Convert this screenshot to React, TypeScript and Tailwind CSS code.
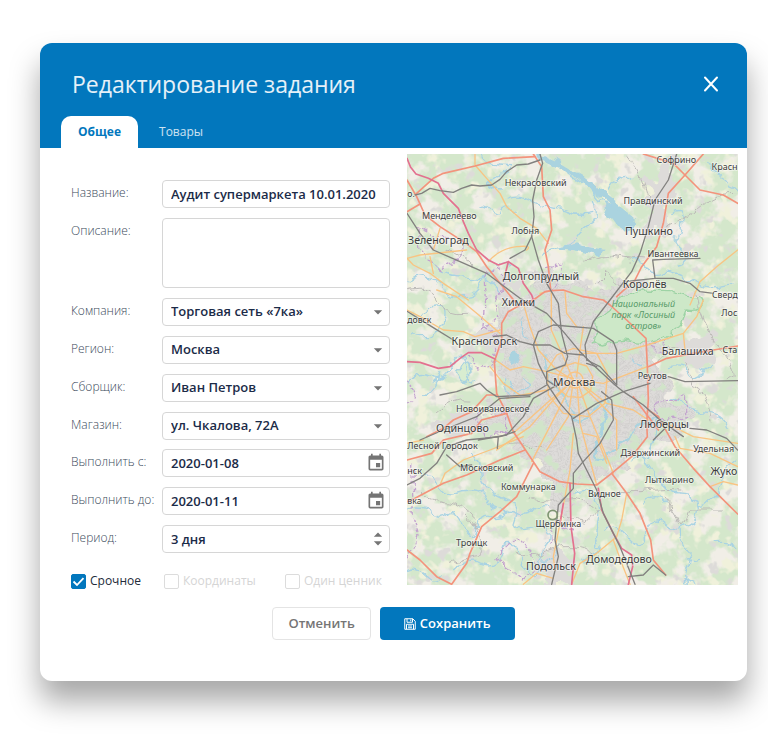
import { ReactNode } from 'react'
import { MdArrowDropDown, MdArrowDropUp, MdEvent } from 'react-icons/md'

const selects = [
  { id: 'company', label: 'Компания:', value: 'Торговая сеть «7ка»' },
  { id: 'region', label: 'Регион:', value: 'Москва' },
  { id: 'picker', label: 'Сборщик:', value: 'Иван Петров' },
  { id: 'store', label: 'Магазин:', value: 'ул. Чкалова, 72А' },
]

const dates = [
  { id: 'from', label: 'Выполнить с:', value: '2020-01-08' },
  { id: 'to', label: 'Выполнить до:', value: '2020-01-11' },
]

const flags = [
  { id: 'urgent', label: 'Срочное', checked: true },
  { id: 'coords', label: 'Координаты', checked: false },
  { id: 'price-tag', label: 'Один ценник', checked: false },
]

const control =
  'w-full rounded-[4px] border border-[#d6d6d6] bg-white px-2 text-[13px] font-semibold text-[#1b2b48] outline-none focus:border-[#0277bd]'

function Row({ id, label, children }: { id: string; label: string; children: ReactNode }) {
  return (
    <div className="flex items-start">
      <label htmlFor={id} className="w-[91px] shrink-0 pt-1 text-xs leading-[18px] font-light whitespace-nowrap text-[#3b4a5b]">
        {label}
      </label>
      <div className="relative min-w-0 flex-1">{children}</div>
    </div>
  )
}

function SaveIcon() {
  return (
    <svg className="size-3" viewBox="0 0 24 24" fill="none" stroke="currentColor" strokeWidth="2" aria-hidden="true">
      <path d="M1.5 1.5h16l5 5v16h-21z" />
      <path d="M6 1.5v7h11v-7M13.5 3v3.500" />
      <path d="M5 22.500v-10h14v10M8 16h8M8 19.500h8" />
    </svg>
  )
}

const rivers = [
  'M490 50Q505 75 530 90T570 110L600 150L640 170',
  'M21 400Q60 370 90 385T130 420T190 440T240 400T300 430',
  'M100 340Q130 380 170 380T230 385T280 360T340 350',
  'M235 175Q260 160 270 180T310 180T350 185M240 12Q250 40 280 45T330 50T290 80T300 120',
  'M320 145Q360 130 390 150T440 170T500 185T580 190',
  'M430 320Q450 290 480 290T530 260T575 220T580 150',
  'M700 80Q680 90 660 85T620 120M920 30Q930 60 960 75T990 110L1013 120',
  'M820 185Q850 170 845 220T830 270T850 300T830 340',
  'M700 330Q730 340 740 360T780 370T850 380T920 410T1000 400',
  'M21 1080Q60 1060 90 1085T140 1090T190 1130T230 1140T270 1100T330 1080',
  'M60 985Q90 960 110 1000T160 1030T220 1020T260 1050T300 1080T350 1090T400 1080T450 1070',
  'M210 900Q240 930 240 970T280 1030T340 1060T345 1110T400 1130T430 1200T480 1190',
  'M160 1260Q200 1220 250 1240T310 1200T370 1240T430 1220',
  'M21 1265Q50 1250 80 1280T130 1275',
  'M21 700Q50 660 90 680T160 640T200 650T230 690M70 740Q110 700 120 670',
  'M60 500Q90 460 120 470T130 520T80 560T30 550',
  'M690 930Q720 910 740 940T770 980T800 1010T850 1030T890 1060T940 1040T970 960T1013 940',
  'M890 1060Q900 1110 860 1130T790 1120T740 1150T680 1160T620 1140',
  'M840 1130Q840 1170 860 1200T860 1260T880 1303M860 1230L900 1225M950 1175Q990 1170 1013 1200',
  'M800 1060Q760 1020 730 1060M810 650Q850 640 860 670T940 640M690 620Q710 650 720 650',
  'M810 750Q830 730 850 760T920 790T980 830',
  'M520 1030Q560 1010 580 1040T590 1130T600 1190T550 1230',
  'M370 500Q360 540 380 560M330 690Q340 730 370 720T380 690M330 740Q300 700 310 680',
]

const minor = [
  'M21 420Q90 400 110 450T200 490M140 300Q200 320 220 350',
  'M680 12Q720 60 735 110T740 150M800 230Q860 210 900 170T1000 130',
  'M560 330Q600 310 650 320T740 330M590 400L620 370L660 410',
  'M880 420Q900 520 960 600T990 690M850 640L920 760L930 810M770 640Q780 600 830 590',
  'M60 1030Q120 1060 150 1060T230 1110M380 1040Q440 1060 500 1050T590 1090',
  'M620 1025L720 1025Q800 1015 840 1020M790 1040L850 1130L870 1080L970 1080',
  'M190 1090Q250 1140 245 1180T230 1220T150 1240M340 1210Q380 1230 450 1200T600 1220',
  'M110 790Q160 740 210 750M330 880Q360 860 390 890L420 880M480 1100L560 1110L600 1080',
]

const secondary = [
  'M225 12V45L260 85L300 130L320 170L360 205L410 235L445 280',
  'M21 325L60 315L200 300M120 235L100 300M265 335Q300 295 350 290T380 300',
  'M21 325L40 345L90 370L130 400L205 450M90 320L100 370',
  'M21 480L60 500L130 540L190 545L225 560L300 540M110 420L170 440L230 490L300 550',
  'M370 460L390 530L415 600L470 660L520 690M283 627L330 660L370 650L440 665L520 685',
  'M270 650L310 700L360 735M454 425V540L490 620L520 690M495 425L500 490L530 530',
  'M550 610L650 610L742 585L850 550L890 500L910 450',
  'M870 465L900 395L950 350L1013 300M850 550L855 600M550 530L540 600L530 680',
  'M530 690L610 700L742 650M530 690L620 760L700 780L745 810',
  'M520 690L460 750L390 830L290 900M520 690L440 720L320 745M520 690L470 790L395 935',
  'M520 690L505 800L440 900M530 690L570 800L620 920L640 970M530 690L540 820L590 1005',
  'M530 690L650 810L650 900M510 700L440 760L340 850M550 850L590 860L620 940',
  'M680 1030L665 1110L650 1160L590 1210L540 1240L515 1303',
  'M930 1010L970 995L1013 1005M825 860L840 895L930 910L1013 950M800 820L880 860L1013 880',
  'M120 1005L135 970L190 930L270 900L370 860M370 1303L410 1270L460 1285',
  'M520 850L510 960L480 1120L460 1220L465 1260M21 880L70 870',
  'M640 1170L665 1240L690 1303M420 430L455 422',
]

const trunk = [
  'M435 425L400 450L370 460L325 485L305 520V570L283 635L290 730L320 790L340 845L400 935L420 965L480 995L530 1002L590 1005L635 970L695 920L742 860L740 820L745 750L742 650L738 565L680 510L630 465L610 450L550 440L490 420L455 422Z',
  'M21 90L50 140L75 195L120 230L190 275L230 305L260 350L300 400L345 455',
  'M21 185L60 162M50 130L100 85L130 70L225 48L310 25L405 20',
  'M400 12L425 50L430 140L450 180L455 240L435 300L445 350L452 420',
  'M910 12L855 75L805 130L790 220L770 290L725 350L705 390L650 440',
  'M730 12L820 40L855 75L900 120L970 135L1013 160',
  'M745 650L800 625L880 610L940 600L1014 588',
  'M745 780L775 800L825 890L880 955L930 1010L1013 1092M700 740L775 840',
  'M635 970L680 1030L720 1090L752 1170L760 1230L797 1275',
  'M400 940L350 1040L300 1085L245 1130L210 1210L200 1240L155 1303L110 1280L60 1230L21 1200',
  'M21 1055L45 1045L130 1000L200 975L300 930L375 900',
  'M21 930L95 910L130 870L215 850L245 810L320 790M80 860L130 835L160 810L215 785L260 735L290 735',
]

const motorway = [
  'M21 25L32 52L48 72L85 85L115 100L130 130L175 175L190 215L205 250L230 300L265 330L295 345L325 335L355 355L370 400L395 435L400 450',
  'M21 635L60 637L115 655L150 650L180 625L205 608L245 608L285 627M325 335L315 375',
  'M510 1000L513 1130L524 1210L515 1303M490 1060L480 1120',
  'M595 1015L605 1080L640 1150L665 1195L695 1215L698 1250L685 1303',
]

const rail = [
  'M21 190L60 250L100 300L180 335L260 370L360 445L440 490L490 545L540 605L580 645L645 705L670 725L730 765L780 810L850 860',
  'M420 12L428 40L410 90L398 150L402 200L395 260L415 330L440 400L475 460L485 550L503 620L495 645L440 665V700L480 760L515 800L530 870L535 910L560 960L590 1020L610 1090L660 1190L705 1303',
  'M395 260L375 300L330 325M830 12L805 90L765 150L745 230L720 310L695 365L630 450L580 515L555 585L560 630',
  'M675 395L765 385L820 385L870 400L900 425L940 430M765 385L758 330L790 328L900 325',
  'M21 484L95 530L160 570M280 560L320 555L360 575L400 585H450L495 610L550 615M400 585L415 545L460 525L580 535L640 575L650 600V705',
  'M400 585L415 640L440 690L470 710M120 735L170 725L240 700L260 720L290 740L390 735L440 705',
  'M60 870L130 840L230 800L300 745L390 740M235 870L320 855L370 800L400 745L480 700',
  'M21 1005L60 985L110 940L140 890L200 870L300 860L345 845M295 860L292 895M140 915L180 950L215 945',
  'M670 725L590 760L520 805M605 725L635 750L640 810L600 880L545 940L520 970V1015L475 1065L465 1170L475 1220L455 1303',
  'M670 725L750 700M805 680L855 695L1013 692M870 835L920 840L980 865L1013 900M560 630L600 650L650 705',
  'M685 1280L730 1275L760 1245L797 1275M760 870L800 830M590 650L560 640',
]

const borders = [
  'M50 230L110 260L180 260L185 320L120 360L60 300ZM255 370L300 360L320 400L285 450L290 500L250 540L260 470Z',
  'M200 610L230 660L280 650L290 560L250 530M21 690L45 730L21 760',
  'M230 790L320 790L310 850L250 860ZM35 940L40 1100L55 1150L21 1230',
  'M285 1220L350 1160L400 1210L410 1260L370 1290L310 1240ZM745 590L800 570L790 610ZM760 760L860 740L860 800L780 810Z',
  'M440 350L490 335L480 400L450 420M450 1180L460 1110L520 1150',
]

// [text, x, baseline, size, anchor]
const places: [string, number, number, number, 'start' | 'middle' | 'end'][] = [
  ['о.', 22, 140, 26, 'start'],
  ['Некрасовский', 407, 107, 27, 'middle'],
  ['Менделеево', 148, 207, 27, 'middle'],
  ['Зеленоград', 115, 281, 32, 'middle'],
  ['Лобня', 376, 253, 27, 'middle'],
  ['Долгопрудный', 423, 391, 32, 'middle'],
  ['Софрино', 829, 38, 27, 'middle'],
  ['Красн', 1013, 60, 27, 'end'],
  ['Правдинский', 759, 163, 27, 'middle'],
  ['Пушкино', 747, 256, 32, 'middle'],
  ['Ивантеевка', 819, 322, 27, 'middle'],
  ['Королёв', 734, 413, 32, 'middle'],
  ['Сверд', 1013, 443, 26, 'end'],
  ['Химки', 355, 467, 32, 'middle'],
  ['довск', 22, 520, 26, 'start'],
  ['Красногорск', 253, 585, 32, 'middle'],
  ['Лос', 1012, 498, 27, 'end'],
  ['Балашиха', 863, 615, 32, 'middle'],
  ['Ста', 1012, 610, 27, 'end'],
  ['Реутов', 757, 687, 27, 'middle'],
  ['Москва', 523, 708, 35, 'middle'],
  ['Новоивановское', 278, 785, 27, 'middle'],
  ['Одинцово', 187, 847, 32, 'middle'],
  ['Люберцы', 793, 835, 32, 'middle'],
  ['Лесной Городок', 22, 898, 27, 'start'],
  ['Дзержинский', 751, 917, 27, 'middle'],
  ['Удельная', 941, 905, 27, 'middle'],
  ['Московский', 260, 963, 27, 'middle'],
  ['нск', 22, 973, 27, 'start'],
  ['Жуко', 1012, 975, 32, 'end'],
  ['Коммунарка', 385, 1020, 27, 'middle'],
  ['Лыткарино', 808, 1000, 27, 'middle'],
  ['вка', 22, 1063, 26, 'start'],
  ['Видное', 613, 1042, 27, 'middle'],
  ['Щербинка', 475, 1131, 27, 'middle'],
  ['Троицк', 215, 1188, 27, 'middle'],
  ['Подольск', 453, 1261, 32, 'middle'],
  ['Домодедово', 657, 1240, 32, 'middle'],
]

const park = ['Национальный', 'парк «Лосиный', 'остров»']

const cityOutline =
  'M320 480L370 430L440 350L500 400L600 430L690 370L740 400L700 450L720 500L780 590L780 690L880 800L830 860L750 860L680 940L640 970L520 1000L500 1120L450 1080L470 1000L410 930L300 840L200 840L300 760L290 580Z'

function MoscowMap() {
  return (
    <svg className="block h-auto w-full" viewBox="21 12 993 1293" role="img" aria-label="Карта">
      <defs>
        <filter id="forest" x="0" y="0" width="100%" height="100%" colorInterpolationFilters="sRGB">
          <feTurbulence type="fractalNoise" baseFrequency="0.014" numOctaves="4" seed="7" />
          <feColorMatrix values="0 0 0 0 0.830  0 0 0 0 0.906  0 0 0 0 0.795  7 0 0 0 -2.600" />
        </filter>
        <filter id="fields" x="0" y="0" width="100%" height="100%" colorInterpolationFilters="sRGB">
          <feTurbulence type="fractalNoise" baseFrequency="0.022" numOctaves="3" seed="21" />
          <feColorMatrix values="0 0 0 0 0.940  0 0 0 0 0.945  0 0 0 0 0.860  0 7 0 0 -3.900" />
        </filter>
        <filter id="towns" x="0" y="0" width="100%" height="100%" colorInterpolationFilters="sRGB">
          <feTurbulence type="fractalNoise" baseFrequency="0.026" numOctaves="3" seed="4" />
          <feColorMatrix values="0 0 0 0 0.865  0 0 0 0 0.860  0 0 0 0 0.850  0 0 8 0 -5.100" />
        </filter>
        <filter id="parks" x="0" y="0" width="100%" height="100%" colorInterpolationFilters="sRGB">
          <feTurbulence type="fractalNoise" baseFrequency="0.022" numOctaves="3" seed="12" />
          <feColorMatrix values="0 0 0 0 0.820  0 0 0 0 0.895  0 0 0 0 0.790  10 0 0 0 -5.600" />
          <feComposite in2="SourceGraphic" operator="in" />
        </filter>
        <filter id="rough" x="-10%" y="-10%" width="120%" height="120%">
          <feTurbulence type="fractalNoise" baseFrequency="0.018" numOctaves="3" seed="3" />
          <feDisplacementMap in="SourceGraphic" scale="110" xChannelSelector="R" yChannelSelector="G" />
        </filter>
        <filter id="wiggle" x="-5%" y="-5%" width="110%" height="110%">
          <feTurbulence type="fractalNoise" baseFrequency="0.03" numOctaves="2" seed="9" />
          <feDisplacementMap in="SourceGraphic" scale="34" xChannelSelector="R" yChannelSelector="G" />
        </filter>
        <pattern id="streets" width="34" height="28" patternUnits="userSpaceOnUse" patternTransform="rotate(24)">
          <path d="M0 8H34M12 0V28M24 8V28M12 20H34" stroke="#cbc9c8" strokeWidth="2" fill="none" />
        </pattern>
      </defs>

      <rect x="21" y="12" width="993" height="1293" fill="#f1eee7" />
      <rect x="21" y="12" width="993" height="1293" filter="url(#forest)" />
      <rect x="21" y="12" width="993" height="1293" filter="url(#fields)" />
      <rect x="21" y="12" width="993" height="1293" filter="url(#towns)" />

      <g filter="url(#rough)">
        <path d={cityOutline} fill="#dddbd9" />
        <path
          d="M270 360L340 390L370 460L310 460ZM860 590L940 570L930 640L850 640ZM740 120L800 30L830 60L780 250L740 260ZM210 550L300 530L300 600L230 600ZM120 810L240 790L260 850L130 860ZM410 1230L500 1200L510 1290L420 1290Z"
          fill="#dddbd9"
        />
        <path d={cityOutline} fill="url(#streets)" />
      </g>
      <path d={cityOutline} filter="url(#parks)" />

      <g filter="url(#wiggle)">
        <path
          d="M670 440L720 420L810 422L860 440L895 440L910 470L880 482L855 480L835 530L780 570L735 580L675 570L610 585L575 575L590 540L580 515L630 480Z"
          fill="#cde8c8"
          stroke="#9dd3a5"
          strokeWidth="4"
        />
        <path d="M605 158L655 165L715 215L705 240L660 238L625 195Z" fill="#aad3df" />
        <path d="M420 18L480 45L530 75L600 130L660 175" fill="none" stroke="#aad3df" strokeWidth="15" />
        <path d="M470 292L540 280L570 292L620 300L600 315L540 305Z" fill="#aad3df" />
        <path d="M325 615L350 605L360 630L330 645Z" fill="#aad3df" />
        <path d="M175 680Q160 650 190 640T210 690Q190 710 175 680" fill="#d8edd0" stroke="#aad3df" strokeWidth="5" />
        <g fill="none" stroke="#a9d3e3" strokeWidth="4">
          {rivers.map((d) => (
            <path key={d} d={d} />
          ))}
        </g>
        <path d="M440 610Q430 680 470 720T520 800T590 770T600 850T690 860T740 930" fill="none" stroke="#aad3df" strokeWidth="7" />
      </g>

      <g fill="none" strokeLinejoin="round" strokeLinecap="round">
        <g stroke="#bdbbb8" strokeWidth="3" filter="url(#wiggle)">
          {minor.map((d) => (
            <path key={d} d={d} />
          ))}
        </g>
        <g stroke="#c3a3cf" strokeWidth="4" strokeDasharray="9 9" filter="url(#wiggle)">
          {borders.map((d) => (
            <path key={d} d={d} />
          ))}
        </g>
        <g stroke="#f9c482" strokeWidth="4">
          {secondary.map((d) => (
            <path key={d} d={d} />
          ))}
          <circle cx="525" cy="690" r="24" />
          <path d="M525 638L560 648L578 680L572 722L542 742L504 740L478 718L474 680L490 650Z" />
          <path d="M520 595L590 610L622 670L615 760L565 800L490 790L445 735L442 660L470 615Z" />
        </g>
        <g stroke="#f3937c" strokeWidth="5">
          {trunk.map((d) => (
            <path key={d} d={d} />
          ))}
        </g>
        <g stroke="#e3718f" strokeWidth="5">
          {motorway.map((d) => (
            <path key={d} d={d} />
          ))}
        </g>
        <g stroke="#82817f" strokeWidth="4">
          {rail.map((d) => (
            <path key={d} d={d} />
          ))}
          <path d="M45 135L65 130L90 115L120 122L160 127L185 115L215 105L240 108L275 105L300 88L320 65L350 45L385 42L420 30" />
        </g>
        <circle cx="458" cy="1095" r="14" stroke="#7f9673" strokeWidth="5" />
      </g>

      <g className="font-['Noto_Sans',sans-serif]" fill="#3d3d3d" stroke="#ffffff" strokeOpacity="0.5" strokeWidth="5" paintOrder="stroke">
        {places.map(([name, x, y, size, anchor]) => (
          <text key={name} x={x} y={y} fontSize={size} textAnchor={anchor}>
            {name}
          </text>
        ))}
      </g>
      <g className="font-['Noto_Sans',sans-serif] italic" fill="#5a9c6b" textAnchor="middle" fontSize="27">
        {park.map((line, i) => (
          <text key={line} x={730} y={470 + i * 34}>
            {line}
          </text>
        ))}
      </g>
    </svg>
  )
}

export default function App() {
  return (
    <div className="min-h-screen bg-white pt-[43px] pr-[21px] pb-[67px] pl-10 font-['Open_Sans',sans-serif]">
      <main className="overflow-hidden rounded-xl bg-white shadow-[0_20px_30px_rgba(0,0,0,0.35)]">
        <header className="bg-[#0277bd] pr-7 pl-[21px]">
          <div className="flex items-center justify-between pt-6 pl-[11px]">
            <h1 className="text-[23px] leading-[34px] text-white/90">Редактирование задания</h1>
            <button type="button" aria-label="Закрыть" className="text-white">
              <svg className="size-4" viewBox="0 0 16 16" fill="none" stroke="currentColor" strokeWidth="2" strokeLinecap="round">
                <path d="M2 1.500l12 13M14 1.500l-12 13" />
              </svg>
            </button>
          </div>
          <nav role="tablist" className="flex pt-[15px] text-xs">
            <button type="button" role="tab" aria-selected="true" className="h-8 rounded-t-[10px] bg-white px-[17px] font-bold text-[#0277bd]">
              Общее
            </button>
            <button type="button" role="tab" aria-selected="false" className="h-8 px-[21px] text-white/80">
              Товары
            </button>
          </nav>
        </header>

        <form className="pt-[6px] pb-[41px]" onSubmit={(e) => e.preventDefault()}>
          <div className="flex items-start gap-[17px] pr-[9px] pl-[31px]">
            <div className="w-[319px] shrink-0 pt-[26px]">
              <div className="flex flex-col gap-[10px]">
                <Row id="name" label="Название:">
                  <input id="name" type="text" defaultValue="Аудит супермаркета 10.01.2020" className={`block h-7 ${control}`} />
                </Row>
                <Row id="description" label="Описание:">
                  <textarea id="description" className={`block h-[70px] resize-none ${control}`} />
                </Row>
                {selects.map(({ id, label, value }) => (
                  <Row key={id} id={id} label={label}>
                    <select id={id} className={`block h-7 appearance-none ${control}`}>
                      <option>{value}</option>
                    </select>
                    <MdArrowDropDown className="pointer-events-none absolute top-1 right-[2px] size-5 text-[#757575]" />
                  </Row>
                ))}
              </div>
              <div className="mt-[9px] flex flex-col gap-[10px]">
                {dates.map(({ id, label, value }) => (
                  <Row key={id} id={id} label={label}>
                    <input id={id} type="text" defaultValue={value} className={`block h-7 ${control}`} />
                    <button type="button" aria-label="Выбрать дату" className="absolute top-1 right-1 text-[#757575]">
                      <MdEvent className="size-5" />
                    </button>
                  </Row>
                ))}
                <Row id="period" label="Период:">
                  <input id="period" type="text" defaultValue="3 дня" className={`block h-7 ${control}`} />
                  <span className="absolute top-[6px] right-[2px] flex flex-col text-[#757575]">
                    <button type="button" aria-label="Больше" className="h-2 overflow-hidden">
                      <MdArrowDropUp className="-mt-[6px] size-5" />
                    </button>
                    <button type="button" aria-label="Меньше" className="h-2 overflow-hidden">
                      <MdArrowDropDown className="-mt-[6px] size-5" />
                    </button>
                  </span>
                </Row>
              </div>
              <div className="mt-[19px] grid grid-cols-[93px_121px_auto] text-xs">
                {flags.map(({ id, label, checked }) => (
                  <label
                    key={id}
                    className="flex items-center gap-1 leading-[18px] whitespace-nowrap text-[#d5d5d5] has-checked:text-[#222c3a]"
                  >
                    <span className="relative">
                      <input
                        id={id}
                        type="checkbox"
                        defaultChecked={checked}
                        className="peer block size-[15px] appearance-none rounded-[2px] border border-[#dcdcdc] bg-white checked:border-[#0277bd] checked:bg-[#0277bd]"
                      />
                      <svg
                        className="pointer-events-none absolute inset-0 hidden size-[15px] text-white peer-checked:block"
                        viewBox="0 0 15 15"
                        fill="none"
                        stroke="currentColor"
                        strokeWidth="1.800"
                      >
                        <path d="M2.500 7.500l3.500 3.500l6.500-6.800" />
                      </svg>
                    </span>
                    {label}
                  </label>
                ))}
              </div>
            </div>
            <div className="min-w-0 flex-1">
              <MoscowMap />
            </div>
          </div>

          <div className="mt-[17px] flex items-center justify-center gap-[9px] text-[13px] font-semibold">
            <button type="button" className="h-[33px] rounded-[4px] border border-[#e4e4e4] px-[15px] text-[#757575]">
              Отменить
            </button>
            <button type="submit" className="flex h-[33px] items-center gap-1 rounded-[4px] bg-[#0277bd] px-6 text-white">
              <SaveIcon />
              Сохранить
            </button>
          </div>
        </form>
      </main>
    </div>
  )
}
